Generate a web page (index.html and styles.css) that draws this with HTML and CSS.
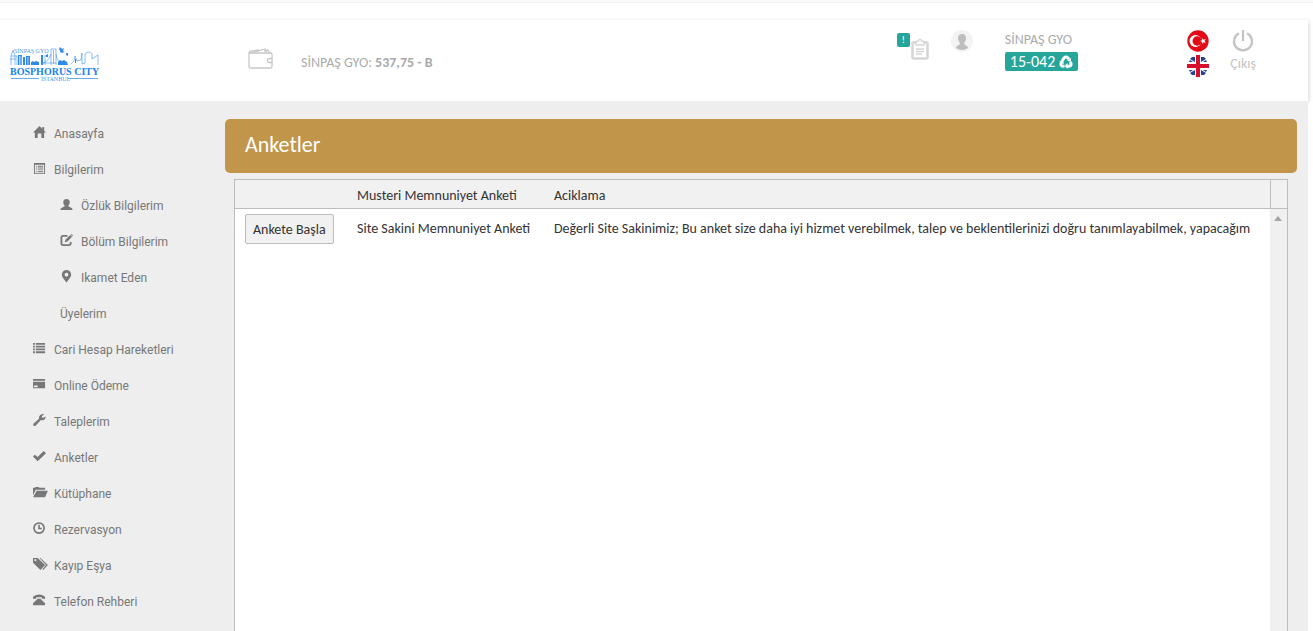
FILE: index.html
```html
<!DOCTYPE html>
<html lang="tr">
<head>
<meta charset="utf-8">
<meta name="viewport" content="width=device-width, initial-scale=1">
<title>Anketler</title>
<link rel="stylesheet" href="styles.css">
</head>
<body>
<div class="topline"></div>
<header class="header">
  <a class="logo" href="#" aria-label="Bosphorus City">
    <svg width="90" height="36" viewBox="0 0 90 36" fill="none" stroke="#2f8be6">
      <g stroke-width=".8" opacity=".7">
        <path d="M1 19V10l2-6 2 6v9M1 10h6v9M0 13h6M32 19V9M35 19V9M33 17q6-2 8-9M41 19V3h5v16M46 8q1 7 5 9M61 18q4-2 4-8l2 5 4-1 1-7v11l3-1V8q4-4 7 0v5l6-4v10M32 17h14M43.500 4v14"/>
      </g>
      <g fill="#2f8be6" stroke="none">
        <path d="M8 9h4v10H8zM13 11h2v8h-2zM16 10h4v9h-4zM21 16l2-1 1 1 2-1 3 1v3h-8zM31 9h2v10h-2zM36 9l2-1v3h-2zM48 16l2-2 2 1 2-1 3 2 1 3H48zM50 1l2 2 2-1-1 3 2 1-4 1-2-4zM56 7h2v3l-2-1zM65 13h1v4h-1z"/>
      </g>
      <path d="M9.500 10v9M11 10v9M18 11v8" stroke="#fff" stroke-width=".6"/>
      <path d="M1 32.500h28M58 32.500h30" stroke="#68abeb"/>
      <text class="logo-small" x="4" y="7">SİNPAŞ GYO</text>
      <text class="logo-name" x="0" y="29">BOSPHORUS CITY</text>
      <text class="logo-small" x="31" y="35">İSTANBUL</text>
    </svg>
  </a>
  <div class="balance">
    <svg class="wallet" width="26" height="22" viewBox="0 0 26 22" fill="none" stroke="#c8c8c8" stroke-width="1.300">
      <rect x="1" y="5" width="23" height="15" rx="1.500"/>
      <path d="M1 6q0-3 3-3l7-1M4 5l13-4 2 4M16 3l4-1 2 3M24.500 10.500h-3a2 2 0 0 0 0 4h3"/>
    </svg>
    <span>SİNPAŞ GYO: <b>537,75 - B</b></span>
  </div>
  <div class="tasks">
    <span class="alert">!</span>
    <svg width="20" height="23" viewBox="0 0 20 23" fill="none" stroke="#d6d6d6">
      <rect x="2.500" y="4.500" width="15" height="16" stroke-width="2.500" rx="1"/>
      <path d="M6 5q0-2 2-2 2-3 4 0 2 0 2 2v2H6z" fill="#fff" stroke-width="1.500"/>
      <path d="M6 11h8M6 13.500h8M6 16h6" stroke-width="1.300"/>
    </svg>
  </div>
  <svg class="avatar" width="22" height="22" viewBox="0 0 22 22">
    <circle cx="11" cy="11" r="11" fill="#f3f3f3"/>
    <path d="M11 4c3 0 4 2 4 4.500 0 2-1 3-1.700 4v2c1 1 3.500 1 3.700 3.500q-6 4-12 0c.2-2.500 2.700-2.500 3.700-3.500v-2C8 11.500 7 10.500 7 8.500 7 6 8 4 11 4z" fill="#bdbdbd"/>
  </svg>
  <div class="account">
    <span>SİNPAŞ GYO</span>
    <button class="unit" type="button">15-042
      <svg width="14" height="14" viewBox="0 0 14 14" fill="none" stroke="#fff" stroke-width="3">
        <path d="M3.200 6 5 3q2-2 4 0l.7 1.200M11.200 7l.8 1.500q.5 2.500-2 2.800H8M5.500 11.300H4Q1.500 11 2 8.500L3 7"/>
        <path d="M8 5.500 12 3v4zM8.500 8v6L5.700 11zM0 6l4-.5L5 9z" fill="#fff" stroke="none"/>
      </svg>
    </button>
  </div>
  <div class="languages">
    <button type="button" aria-label="Türkçe">
      <svg width="22" height="22" viewBox="0 0 22 22"><circle cx="11" cy="11" r="10.700" fill="#e30a17"/><circle cx="8.500" cy="11" r="6" fill="#fff"/><circle cx="10.200" cy="11" r="4.700" fill="#e30a17"/><path d="m13 11 2.200-.7V8l1.400 1.800 2.200-.7-1.300 1.900 1.300 1.900-2.200-.7-1.400 1.800v-2.300z" fill="#fff"/></svg>
    </button>
    <button type="button" aria-label="English">
      <svg width="22" height="22" viewBox="0 0 22 22"><path d="M5 2h3v5L3 4zM14 2h3l2 2-5 3zM3 5l3 2H2zM19 5l-3 2h4zM3 18l5-3v5H5zM19 18l-5-3v5h3zM2 15h4l-3 2zM20 15h-4l3 2z" fill="#27438f"/><path d="M9 0h4v9h9v4h-9v9H9v-9H0V9h9z" fill="#d80f2c"/></svg>
    </button>
  </div>
  <a class="logout" href="#">
    <svg width="22" height="22" viewBox="0 0 22 22" fill="none" stroke="#c4c4c4" stroke-width="2.300"><path d="M7 3.300a9 9 0 1 0 8 0M11 0v11"/></svg>
    <span>Çıkış</span>
  </a>
</header>
<div class="body">
  <nav class="sidebar">
    <a href="#"><svg viewBox="0 0 14 14"><path d="M7 0 0 7h2v6h3V8h4v5h3V7h2l-2-2V1h-2v2z"/></svg>Anasayfa</a>
    <a href="#"><svg viewBox="0 0 14 14"><path fill-rule="evenodd" d="M1 1h12v12H1zm1 2v9h10V3zM3 4h1v1H3zm2 0h6v1H5zM3 6h1v1H3zm2 0h6v1H5zM3 8h1v1H3zm2 0h6v1H5zm-2 2h1v1H3zm2 0h6v1H5z"/></svg>Bilgilerim</a>
    <a class="sub" href="#"><svg viewBox="0 0 14 14"><path d="M7 1c2.500 0 3.500 1.500 3.500 3.500S9.500 7.500 9 8v1l4 2q.5 1 .5 2H.5q0-1 .5-2l4-2V8c-.500-.5-1.500-1.500-1.500-3.500S4.500 1 7 1z"/></svg>Özlük Bilgilerim</a>
    <a class="sub" href="#"><svg viewBox="0 0 14 14"><path d="M8 2H3.500Q1.500 2 1.500 4v6q0 2 2 2h6q2 0 2-2V8.500" fill="none" stroke="#777" stroke-width="2"/><path d="m5 9 1-3 5-5 2 2-5 5zM11.500.5l1-.5 1.500 1.500-.7 1z"/></svg>Bölüm Bilgilerim</a>
    <a class="sub" href="#"><svg viewBox="0 0 14 14"><path fill-rule="evenodd" d="M7 0a5 5 0 0 1 5 5C12 8 9 10 7 13.500 5 10 2 8 2 5a5 5 0 0 1 5-5zm0 3a2 2 0 1 0 0 4 2 2 0 0 0 0-4z"/></svg>Ikamet Eden</a>
    <a class="sub" href="#">Üyelerim</a>
    <a href="#"><svg viewBox="0 0 14 14"><path d="M0 1h2v2H0zm3 0h10v2H3zM0 4h2v2H0zm3 0h10v2H3zM0 7h2v2H0zm3 0h10v2H3zM0 10h2v2H0zm3 0h10v2H3z"/></svg>Cari Hesap Hareketleri</a>
    <a href="#"><svg viewBox="0 0 14 14"><path fill-rule="evenodd" d="M0 1h13v2H0zM0 4h13v7H0zm1 4v2h4V8z"/></svg>Online Ödeme</a>
    <a href="#"><svg viewBox="0 0 14 14"><path d="M12 0 9.500 2.500 10 4h1.500L13.500 2.500C14 6 11 7.500 8.500 6.500L2.500 13 0 12.500.5 10.500 6.500 5C6 2 8.500-.5 12 0z"/></svg>Taleplerim</a>
    <a href="#"><svg viewBox="0 0 14 14"><path d="m0 7 2-2 3 2.500L11.500 1 14 3.500 5 12z"/></svg>Anketler</a>
    <a href="#"><svg viewBox="0 0 14 14"><path d="M0 2h2l1-1h3l1 1h6v2H3L0 10zM4 5h12l-3 7H0z"/></svg>Kütüphane</a>
    <a href="#"><svg viewBox="0 0 14 14"><path d="M6.500 1a5.500 5.500 0 1 0 .01 0M6.500 3v4h3" fill="none" stroke="#777" stroke-width="1.700"/></svg>Rezervasyon</a>
    <a href="#"><svg viewBox="0 0 14 14"><path fill-rule="evenodd" d="M0 0h5l8 7.500L8 13 0 5zm2.500 1a1.200 1.200 0 1 0 .01 0zM7 0h1l8 7.500L11 13l-1-1 4-4.500z"/></svg>Kayıp Eşya</a>
    <a href="#"><svg viewBox="0 0 14 14"><path d="M0 5V3q6.500-5 13 0v2H9.500V3.500h-6V5zM5 5h3l5 5v2H0v-2z"/></svg>Telefon Rehberi</a>
  </nav>
  <main class="main">
    <h1 class="title">Anketler</h1>
    <section class="grid">
      <div class="viewport">
        <table class="surveys">
          <thead>
            <tr><th class="col-action" aria-label="İşlem"></th><th class="col-name">Musteri Memnuniyet Anketi</th><th>Aciklama</th></tr>
          </thead>
          <tbody>
            <tr><td><button class="start" type="button">Ankete Başla</button></td><td>Site Sakini Memnuniyet Anketi</td><td>Değerli Site Sakinimiz; Bu anket size daha iyi hizmet verebilmek, talep ve beklentilerinizi doğru tanımlayabilmek, yapacağım</td></tr>
          </tbody>
        </table>
      </div>
      <div class="rail">
        <div class="rail-head"></div>
        <svg width="16" height="18" viewBox="0 0 16 18"><path d="m4 12 4-5 4 5z" fill="#a3a3a3"/></svg>
      </div>
    </section>
  </main>
</div>
</body>
</html>
```
FILE: styles.css
```css
* { box-sizing: border-box; }
html, body { height: 100%; }
body {
  margin: 0;
  display: flex;
  flex-direction: column;
  background: #fff;
  color: #333;
  font: 14px/20px Carlito, Calibri, "Noto Sans", sans-serif;
  overflow: hidden;
}
a { color: inherit; text-decoration: none; }
button { font: inherit; cursor: pointer; }
svg { display: block; flex: none; }

.topline { height: 3px; margin-bottom: 17px; background: #fafafa; border-bottom: 1px solid #f2f2f2; flex: none; }
.header {
  display: flex;
  align-items: flex-start;
  height: 81px;
  flex: none;
  margin-right: 5px;
  padding: 10px 52px 0 10px;
  color: #aaa;
  background: #fff;
  box-shadow: 1px 1px 4px rgba(0, 0, 0, .16);
}
.logo { width: 238px; padding-top: 16px; }
.logo-name { font: bold 10px "Liberation Serif", serif; fill: #1683ea; stroke: none; }
.logo-small { font: 6px "Liberation Serif", serif; fill: #4a9bea; stroke: none; }
.balance { display: flex; gap: 27px; padding-top: 18px; margin-right: auto; }
.balance span { padding-top: 5px; }
.tasks { display: flex; align-items: flex-start; margin-right: 21px; }
.tasks svg { margin-top: 8px; }
.alert {
  width: 13px;
  height: 14px;
  margin-top: 3px;
  border-radius: 2px;
  background: #26a69a;
  color: #fff;
  font-size: 11px;
  line-height: 14px;
  text-align: center;
}
.avatar { margin-right: 32px; }
.account { display: flex; flex-direction: column; align-items: flex-start; gap: 2px; margin-right: 109px; }
.unit {
  display: flex;
  align-items: center;
  gap: 4px;
  height: 19px;
  padding: 0 5px;
  border: 0;
  border-radius: 2px;
  background: #26a69a;
  color: #fff;
  font-size: 16px;
}
.languages { display: flex; flex-direction: column; gap: 3px; margin-right: 21px; }
.languages button { padding: 0; border: 0; background: none; }
.logout { display: flex; flex-direction: column; align-items: center; gap: 2px; color: #c4c4c4; }

.body { display: flex; flex: 1; min-height: 0; margin-right: 5px; background: #eee; position: relative; }
.sidebar {
  width: 225px;
  flex: none;
  padding: 15px 0 0 33px;
  color: #777;
  font: 12px/36px Roboto, sans-serif;
}
.sidebar a { display: flex; align-items: center; gap: 8px; height: 36px; }
.sidebar svg { width: 13px; height: 13px; margin-bottom: 3px; fill: #777; overflow: visible; }
.sidebar .sub { padding-left: 27px; }

.main { display: flex; flex-direction: column; flex: 1; min-width: 0; padding: 18px 11px 0 0; }
.title {
  margin: 0 0 6px;
  padding: 12px 20px 14px;
  border-radius: 5px;
  background: #c1964a;
  color: #fff;
  font-size: 22px;
  font-weight: 400;
  line-height: 28px;
}
.grid { display: flex; flex: 1; min-height: 0; margin: 0 9px; border: 1px solid #bdbdbd; border-bottom: 0; background: #fff; }
.viewport { flex: 1; min-width: 0; overflow: hidden; }
.surveys { width: 100%; table-layout: fixed; border-collapse: separate; border-spacing: 0; white-space: nowrap; }
.surveys th, .surveys td { padding: 0 0 0 10px; overflow: hidden; text-align: left; font-weight: 400; }
.surveys th { height: 29px; padding-top: 4px; border-bottom: 1px solid #bdbdbd; background: #f1f1f1; }
.surveys td { height: 40px; }
.surveys .col-action { width: 112px; }
.surveys .col-name { width: 197px; }
.start { height: 30px; padding: 2px 7px 0; border: 1px solid #bdbdbd; border-radius: 2px; background: #f1f1f1; color: #333; }
.rail { width: 17px; flex: none; background: #f0f0f0; }
.rail-head { height: 29px; border-left: 1px solid #bdbdbd; border-bottom: 1px solid #bdbdbd; background: #f1f1f1; }
```
